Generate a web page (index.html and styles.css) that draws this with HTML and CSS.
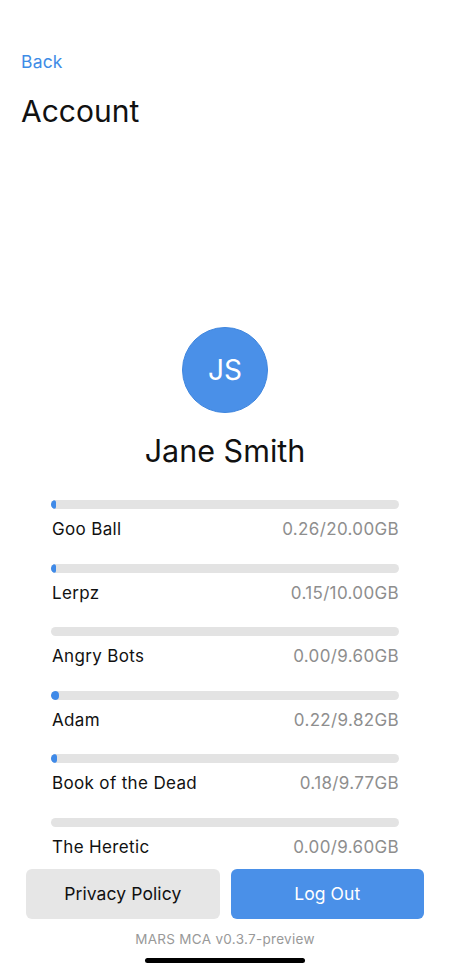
FILE: index.html
```
<!DOCTYPE html>
<html lang="en">
<head>
<meta charset="utf-8">
<title>Account</title>
<link rel="stylesheet" href="styles.css">
</head>
<body>
<div class="page">
  <header class="nav">
    <a class="back" href="#">Back</a>
    <h1 class="title">Account</h1>
  </header>
  <section class="profile">
    <div class="avatar">JS</div>
    <div class="name">Jane Smith</div>
  </section>
  <ul class="usage">
    <li class="row">
      <div class="bar"><div class="fill" style="width:1.3%"></div></div>
      <div class="line"><span class="label">Goo Ball</span><span class="value">0.26/20.00GB</span></div>
    </li>
    <li class="row">
      <div class="bar"><div class="fill" style="width:1.5%"></div></div>
      <div class="line"><span class="label">Lerpz</span><span class="value">0.15/10.00GB</span></div>
    </li>
    <li class="row">
      <div class="bar"><div class="fill" style="width:0%"></div></div>
      <div class="line"><span class="label">Angry Bots</span><span class="value">0.00/9.60GB</span></div>
    </li>
    <li class="row">
      <div class="bar"><div class="fill" style="width:2.24%"></div></div>
      <div class="line"><span class="label">Adam</span><span class="value">0.22/9.82GB</span></div>
    </li>
    <li class="row">
      <div class="bar"><div class="fill" style="width:1.84%"></div></div>
      <div class="line"><span class="label">Book of the Dead</span><span class="value">0.18/9.77GB</span></div>
    </li>
    <li class="row">
      <div class="bar"><div class="fill" style="width:0%"></div></div>
      <div class="line"><span class="label">The Heretic</span><span class="value">0.00/9.60GB</span></div>
    </li>
  </ul>
  <div class="actions">
    <button class="btn btn-secondary">Privacy Policy</button>
    <button class="btn btn-primary">Log Out</button>
  </div>
  <div class="version">MARS MCA v0.3.7-preview</div>
  <div class="home-indicator"></div>
</div>
</body>
</html>
```
FILE: styles.css
```
* { box-sizing: border-box; }
html, body {
  margin: 0;
  padding: 0;
  background: #ffffff;
}
body {
  font-family: Inter, "Noto Sans", "Liberation Sans", sans-serif;
  color: #111111;
  width: 450px;
  height: 974px;
  overflow: hidden;
}
.page {
  display: flex;
  flex-direction: column;
  height: 974px;
}
.nav {
  padding: 50px 21px 0;
  display: flex;
  flex-direction: column;
  align-items: flex-start;
}
.back {
  font-size: 17.5px;
  line-height: 24px;
  color: #3e8ce6;
  text-decoration: none;
  letter-spacing: 0.2px;
}
.title {
  margin: 19px 0 0;
  font-size: 30px;
  line-height: 36px;
  font-weight: 400;
  color: #111111;
}
.profile {
  display: flex;
  flex-direction: column;
  align-items: center;
  margin-top: 198px;
}
.avatar {
  width: 86px;
  height: 86px;
  border-radius: 50%;
  background: #4a90e8;
  border: 1px solid #3f86de;
  color: #ffffff;
  font-size: 28px;
  display: flex;
  align-items: center;
  justify-content: center;
}
.name {
  margin-top: 20px;
  font-size: 30.5px;
  line-height: 36px;
  color: #111111;
}
.usage {
  list-style: none;
  margin: 31px 0 0;
  padding: 0 51px;
  display: flex;
  flex-direction: column;
  gap: 23.6px;
}
.row {
  display: flex;
  flex-direction: column;
}
.bar {
  height: 9px;
  border-radius: 4.5px;
  background: #e3e3e3;
  overflow: hidden;
}
.fill {
  height: 100%;
  border-radius: 4.5px;
  background: #3f8ae8;
}
.line {
  margin-top: 9px;
  display: flex;
  justify-content: space-between;
  align-items: baseline;
  font-size: 17px;
  line-height: 22px;
  letter-spacing: 0.35px;
  padding-left: 1px;
}
.label { color: #111111; }
.value { color: #8e8e8e; }
.actions {
  margin-top: 11px;
  padding: 0 26px;
  display: flex;
  gap: 11px;
}
.btn {
  flex: 1;
  height: 50px;
  border: none;
  border-radius: 6px;
  font-family: Inter, "Noto Sans", "Liberation Sans", sans-serif;
  font-size: 17.5px;
  letter-spacing: 0.1px;
}
.btn-secondary {
  background: #e6e6e6;
  color: #111111;
}
.btn-primary {
  background: #4a90e8;
  color: #ffffff;
}
.version {
  margin-top: 11px;
  text-align: center;
  font-size: 13.5px;
  line-height: 18px;
  letter-spacing: 0.3px;
  color: #999999;
}
.home-indicator {
  margin: 10px auto 0;
  width: 160px;
  height: 5px;
  border-radius: 3px;
  background: #000000;
}
```
